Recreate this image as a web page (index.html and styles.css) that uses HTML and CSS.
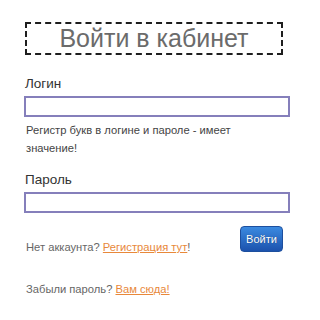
FILE: index.html
```html
<!DOCTYPE html>
<html lang="ru">
<head>
<meta charset="utf-8">
<title>Войти в кабинет</title>
<link rel="stylesheet" href="styles.css">
</head>
<body>
<div class="wrap">
  <div class="title">Войти в кабинет</div>
  <form class="form">
    <div class="label label-login">Логин</div>
    <input class="field" type="text">
    <p class="hint">Регистр букв в логине и пароле - имеет значение!</p>
    <div class="label label-pass">Пароль</div>
    <input class="field" type="password">
    <div class="row">
      <div class="note">Нет аккаунта? <a href="#" class="link">Регистрация тут</a>!</div>
      <button type="button" class="btn">Войти</button>
    </div>
    <div class="note forgot">Забыли пароль? <a href="#" class="link">Вам сюда!</a></div>
  </form>
</div>
</body>
</html>
```

FILE: styles.css
```css
html, body {
  margin: 0;
  padding: 0;
  background: #fff;
}
body {
  font-family: "Liberation Sans", Arial, sans-serif;
}
.wrap {
  width: 266px;
  padding: 22px 24px 0 24px;
}
.title {
  width: 254px;
  height: 29px;
  margin-left: 1px;
  border: 2px dashed #1e1e1e;
  font-size: 25px;
  line-height: 29px;
  text-align: center;
  color: #6b6b6b;
}
.form {
  margin: 0;
  display: flex;
  flex-direction: column;
}
.label {
  font-size: 13.5px;
  font-weight: normal;
  line-height: 16px;
  color: #333;
  margin-left: 1px;
}
.label-login {
  margin-top: 21px;
}
.label-pass {
  margin-top: 15px;
}
.field {
  box-sizing: border-box;
  width: 266px;
  height: 21px;
  margin: 4px 0 0 0;
  border: 2px solid #857fbb;
  background: #fff;
  padding: 0 4px;
  outline: none;
}
.hint {
  margin: 4px 0 0 2px;
  font-size: 11.2px;
  line-height: 18px;
  color: #444;
  width: 230px;
}
.row {
  display: flex;
  justify-content: space-between;
  align-items: flex-start;
  margin-top: 14px;
}
.note {
  margin: 13px 0 0 2px;
  font-size: 11.2px;
  line-height: 14px;
  color: #666;
}
.link {
  color: #e8883a;
  text-decoration: underline;
}
.btn {
  width: 43px;
  height: 26px;
  margin-top: -1px;
  margin-right: 7px;
  padding: 0;
  border: 1px solid #1d4f9e;
  border-radius: 4px;
  background: linear-gradient(#3b8ae0, #1c52ad);
  color: #fff;
  font-family: "Liberation Sans", Arial, sans-serif;
  font-size: 11px;
  text-shadow: 0 0 1px rgba(0, 0, 0, 0.4);
}
.forgot {
  margin-top: 28px;
}
```
